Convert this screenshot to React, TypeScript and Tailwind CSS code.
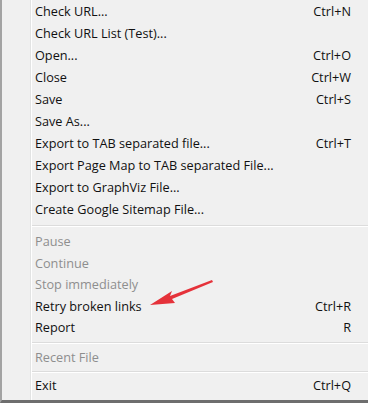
import React from 'react'

type Item =
  | { kind: 'item'; label: string; shortcut?: string; disabled?: boolean; low?: boolean }
  | { kind: 'sep'; h: string }

const items: Item[] = [
  { kind: 'item', label: 'Check URL...', shortcut: 'Ctrl+N' },
  { kind: 'item', label: 'Check URL List (Test)...' },
  { kind: 'item', label: 'Open...', shortcut: 'Ctrl+O' },
  { kind: 'item', label: 'Close', shortcut: 'Ctrl+W' },
  { kind: 'item', label: 'Save', shortcut: 'Ctrl+S' },
  { kind: 'item', label: 'Save As...' },
  { kind: 'item', label: 'Export to TAB separated file...', shortcut: 'Ctrl+T' },
  { kind: 'item', label: 'Export Page Map to TAB separated File...' },
  { kind: 'item', label: 'Export to GraphViz File...' },
  { kind: 'item', label: 'Create Google Sitemap File...' },
  { kind: 'sep', h: 'h-[10px]' },
  { kind: 'item', label: 'Pause', disabled: true, low: true },
  { kind: 'item', label: 'Continue', disabled: true, low: true },
  { kind: 'item', label: 'Stop immediately', disabled: true, low: true },
  { kind: 'item', label: 'Retry broken links', shortcut: 'Ctrl+R', low: true },
  { kind: 'item', label: 'Report', shortcut: 'R', low: true },
  { kind: 'sep', h: 'h-[8px]' },
  { kind: 'item', label: 'Recent File', disabled: true, low: true },
  { kind: 'sep', h: 'h-[7px]' },
  { kind: 'item', label: 'Exit', shortcut: 'Ctrl+Q', low: true },
]

export default function App() {
  return (
    <div
      className="relative flex h-[403px] w-[368px] overflow-hidden border-b-[3px] border-l-2 border-b-[#6e6e6e] border-l-[#a3a3a3] bg-[#f0f0f0] text-[12.7px] text-[#111]"
      style={{ fontFamily: '"Open Sans", "Noto Sans", sans-serif' }}
    >
      {/* icon gutter */}
      <div className="w-[29px] shrink-0 border-r border-r-[#e2e3e3]" />
      <div className="flex flex-1 flex-col border-l border-l-white pt-px">
        {items.map((it, i) =>
          it.kind === 'sep' ? (
            <div key={i} className={`flex ${it.h} shrink-0 flex-col justify-center`}>
              <div className="h-px bg-[#dcdcdc]" />
              <div className="h-px bg-white" />
            </div>
          ) : (
            <div
              key={i}
              className={`flex shrink-0 items-center justify-between pl-[3px] pr-[17px] ${
                it.low ? 'h-[21.5px]' : 'h-[22px]'
              } ${it.disabled ? 'text-[#8e8e8e]' : ''}`}
            >
              <span>{it.label}</span>
              {it.shortcut && <span>{it.shortcut}</span>}
            </div>
          )
        )}
      </div>

      {/* red annotation arrow */}
      <svg
        className="absolute left-[140px] top-[274px]"
        width="80"
        height="40"
        viewBox="0 0 80 40"
      >
        <path d="M70 6 L28 22 L30 17 L8 31 L33 29 L30 25 L71 8 Z" fill="#e5323a" />
      </svg>
    </div>
  )
}
